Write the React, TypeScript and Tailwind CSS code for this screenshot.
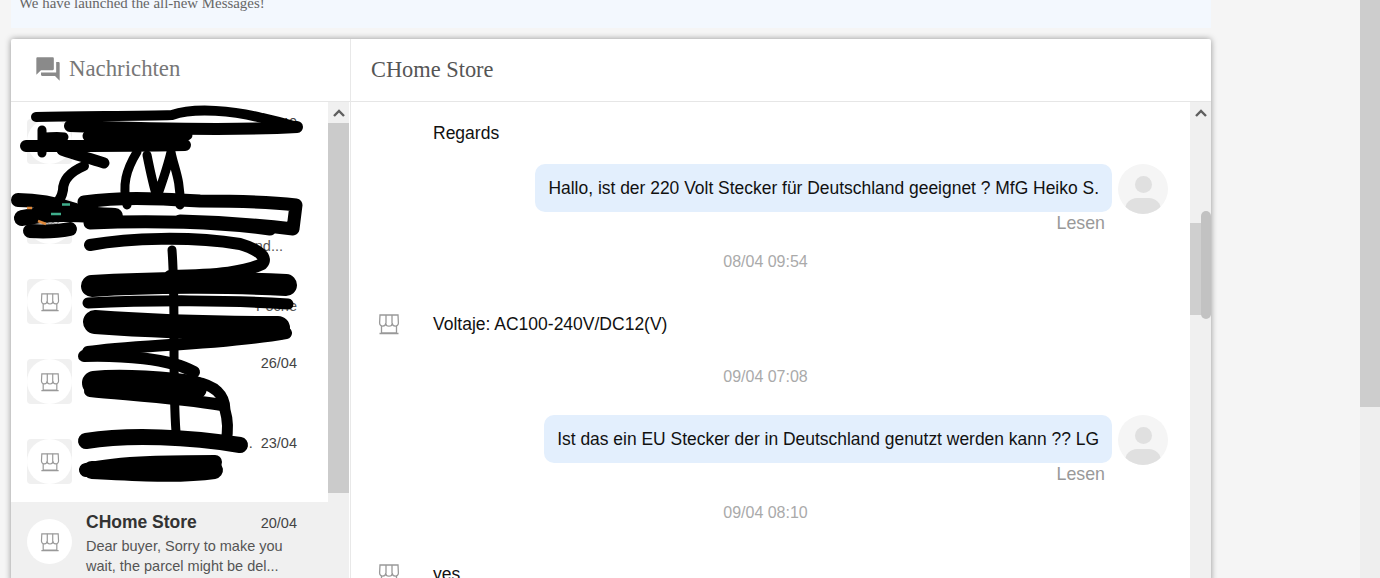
import React from "react";

const sans = "font-['Liberation_Sans',Arial,sans-serif]";
const serif = "font-['Liberation_Serif','Times_New_Roman',serif]";

function StoreIcon({ size = 22 }: { size?: number }) {
  return (
    <svg width={size} height={size} viewBox="0 0 22 22" fill="none" stroke="#999999" strokeWidth="1.3">
      <path d="M2 2h18l.4 8a3.1 3.1 0 0 1-6.2 0 3.2 3.2 0 0 1-6.4 0 3.1 3.1 0 0 1-6.2 0z" />
      <path d="M8 2v8M14 2v8" />
      <path d="M3.5 13v7h15v-7M1.5 20.5h19" />
    </svg>
  );
}

function StoreAvatar() {
  return (
    <div className="w-[45px] h-[45px] shrink-0 rounded-full bg-white flex items-center justify-center">
      <StoreIcon size={20} />
    </div>
  );
}

function ListAvatar() {
  return (
    <div className="w-[45px] h-[45px] shrink-0 bg-[#f0f0f0] rounded-[4px]">
      <StoreAvatar />
    </div>
  );
}

function ChevronUp() {
  return (
    <svg width="12" height="8" viewBox="0 0 12 8" fill="none" stroke="#5f5f5f" strokeWidth="2.4">
      <path d="M1 7l5-5 5 5" />
    </svg>
  );
}

function Row({
  name,
  date,
  line1,
  line2,
  active,
  fragment1,
  fragment2,
}: {
  name: string;
  date: string;
  line1: string;
  line2: string;
  active?: boolean;
  fragment1?: boolean;
  fragment2?: boolean;
}) {
  return (
    <div className={`h-[80px] shrink-0 flex pl-[16px] pr-[31px] pt-[17px] ${active ? "bg-[#f0f0f0]" : "bg-white"}`}>
      {active ? <StoreAvatar /> : <ListAvatar />}
      <div className="ml-[14px] flex-1 min-w-0 -mt-[9px]">
        <div className="flex justify-between items-center h-[24px]">
          <span className="text-[17.5px] font-bold text-[#333] whitespace-nowrap">{name}</span>
          <span className="text-[14.5px] text-[#444] ml-auto mt-[3px] whitespace-pre">{date}</span>
        </div>
        <div className="h-[42px] text-[14.5px] leading-[20px] text-[#555] mt-[2px] whitespace-nowrap">
          <div className={`h-[20px] ${fragment1 ? "text-right" : ""}`}>{line1}</div>
          <div className={`h-[20px] ${fragment2 ? "text-right pr-[14px]" : ""}`}>{line2}</div>
        </div>
      </div>
    </div>
  );
}

function UserAvatar() {
  return (
    <div className="w-[50px] h-[50px] rounded-full bg-[#f5f5f5] overflow-hidden shrink-0 flex flex-col items-center pt-[12px]">
      <div className="w-[17px] h-[17px] shrink-0 rounded-full bg-[#e0e0e0]" />
      <div className="w-[36px] h-[24px] shrink-0 rounded-full bg-[#e0e0e0] mt-[5px]" />
    </div>
  );
}

function Outgoing({ text, className }: { text: string; className: string }) {
  return (
    <div className={className}>
      <div className="flex justify-end items-start pr-[22px]">
        <div className="h-[48px] bg-[#e3effd] rounded-[10px] px-[13px] flex items-center text-[17.45px] text-[#111] whitespace-nowrap">
          {text}
        </div>
        <div className="ml-[6px]">
          <UserAvatar />
        </div>
      </div>
      <div className="pr-[85px] text-right text-[17.8px] leading-[20px] text-[#999] -mt-[1px]">Lesen</div>
    </div>
  );
}

function Stamp({ text, className }: { text: string; className: string }) {
  return <div className={`text-center text-[16px] leading-[20px] text-[#aaa] pr-[10px] ${className}`}>{text}</div>;
}

function Incoming({ text, className }: { text: string; className: string }) {
  return (
    <div className={`flex items-center pl-[27px] ${className}`}>
      <StoreIcon size={22} />
      <span className="ml-[33px] text-[17.5px] text-[#111] leading-[20px]">{text}</span>
    </div>
  );
}

function Scribble() {
  return (
    <svg className="absolute left-[11px] top-[102px] pointer-events-none" width="300" height="385" viewBox="11 102 300 385" fill="none" stroke="#000" strokeLinecap="round" strokeLinejoin="round">
      <path strokeWidth="10" d="M36 117C80 116 140 116 172 115C195 107 235 111 262 118C280 122 290 125 297 127" />
      <path strokeWidth="12" d="M70 126C130 128 230 131 297 127" />
      <path strokeWidth="11" d="M88 136C120 137 160 137 187 135" />
      <path strokeWidth="12" d="M26 146C80 146 140 146 185 145" />
      <path strokeWidth="9" d="M42 130V153M42 137C50 137 58 136 64 137" />
      <path strokeWidth="11" d="M62 150C75 155 90 158 104 163" />
      <path strokeWidth="10" d="M84 166C70 172 63 180 63 190C62 196 60 200 56 204" />
      <path strokeWidth="9" d="M137 152C126 170 122 185 127 205M147 155C150 170 153 185 157 197C163 180 168 165 171 152C174 168 181 180 180 205" />
      <path strokeWidth="14" d="M18 200C40 200 60 205 75 210" />
      <path strokeWidth="16" d="M22 218C50 212 80 214 115 216" />
      <path strokeWidth="14" d="M30 231C45 232 60 231 70 229" />
      <path strokeWidth="13" d="M84 202C120 197 150 198 200 201C240 201 270 202 296 205L293 229C260 225 220 222 180 221" />
      <path strokeWidth="13" d="M90 223C150 220 220 222 270 229" />
      <path strokeWidth="12" d="M90 245C130 238 190 236 240 244C260 250 268 258 262 264C245 272 220 275 170 276" />
      <path strokeWidth="9" d="M172 250C176 300 172 380 176 432" />
      <path strokeWidth="22" d="M92 286C150 282 230 282 286 285" />
      <path strokeWidth="11" d="M88 303C150 300 230 300 288 304" />
      <path strokeWidth="24" d="M95 322C150 326 230 328 278 328" />
      <path strokeWidth="12" d="M88 352C130 345 220 345 286 333" />
      <path strokeWidth="12" d="M84 356C120 355 170 358 194 372" />
      <path strokeWidth="24" d="M94 383C120 380 170 383 195 388" />
      <path strokeWidth="12" d="M90 391C130 395 180 398 222 405" />
      <path strokeWidth="11" d="M195 382C215 385 225 395 225 410C228 420 228 432 226 442" />
      <path strokeWidth="16" d="M86 441C130 434 190 437 240 445" />
      <path strokeWidth="14" d="M86 470C120 462 180 462 215 462" />
      <path strokeWidth="18" d="M92 470C130 472 180 475 214 470" />
      <path strokeWidth="2.5" stroke="#3fae8c" strokeLinecap="butt" d="M51 214h10M62 204.500h8" />
      <path strokeWidth="2.5" stroke="#e08a3c" strokeLinecap="butt" d="M27 208h5M38 221l8 3" />
    </svg>
  );
}

export default function App() {
  return (
    <div className={`relative h-[578px] overflow-hidden flex bg-[#f5f5f5] ${sans}`}>
      <div className="w-[1360px] shrink-0 pl-[11px]">
        <div className={`w-[1200px] h-[33px] bg-[#f3f8fe] overflow-hidden pl-[8px] text-[14.9px] leading-[16px] -mt-[5px] ${serif} text-[#666]`}>
          We have launched the all-new Messages!
        </div>
        <div className="relative mt-[11px] w-[1200px] h-[544px] bg-white rounded-t-[2px] shadow-[0_0_6px_rgba(0,0,0,0.4)] flex overflow-hidden">
          <div className="w-[340px] shrink-0 border-r border-[#e8e8e8] flex flex-col">
            <div className="h-[63px] shrink-0 border-b border-[#e6e6e6] flex items-center pl-[23px]">
              <svg width="28" height="28" viewBox="0 0 24 24" fill="#8a8a8a" className="-mt-[2px]">
                <path d="M21 6h-2v9H6v2c0 .55.45 1 1 1h11l4 4V7c0-.55-.45-1-1-1zm-4 6V3c0-.55-.45-1-1-1H3c-.55 0-1 .45-1 1v14l4-4h10c.55 0 1-.45 1-1z" />
              </svg>
              <span className={`ml-[7px] text-[22.8px] text-[#777] -mt-[1px] ${serif}`}>Nachrichten</span>
            </div>
            <div className="flex flex-1 min-h-0">
              <div className="flex-1 min-w-0 flex flex-col">
                <Row name="" date="15:40" line1="" line2="" />
                <Row name="" date="" line1="" line2="nd..." fragment2 />
                <Row name="" date="" line1="Poche" line2="" fragment1 />
                <Row name="" date="26/04" line1="" line2="" />
                <Row name="" date={".  23/04"} line1="" line2="" />
                <Row active name="CHome Store" date="20/04" line1="Dear buyer, Sorry to make you" line2="wait, the parcel might be del..." />
              </div>
              <div className="w-[21px] mr-[1px] shrink-0 flex flex-col bg-[#f0f0f0]">
                <div className="h-[21px] flex items-center justify-center">
                  <ChevronUp />
                </div>
                <div className="h-[370px] bg-[#cbcbcb]" />
              </div>
            </div>
          </div>
          <div className="flex-1 min-w-0 flex flex-col">
            <div className={`h-[63px] shrink-0 border-b border-[#e6e6e6] flex items-center pl-[20px] text-[22.4px] text-[#555] ${serif}`}>CHome Store</div>
            <div className="flex flex-1 min-h-0">
              <div className="flex-1 min-w-0 overflow-hidden">
                <div className="pl-[82px] pt-[21px] text-[17.5px] leading-[20px] text-[#111]">Regards</div>
                <Outgoing className="mt-[21px]" text="Hallo, ist der 220 Volt Stecker für Deutschland geeignet ? MfG Heiko S." />
                <Stamp className="mt-[19px]" text="08/04 09:54" />
                <Incoming className="mt-[41px]" text="Voltaje: AC100-240V/DC12(V)" />
                <Stamp className="mt-[32px]" text="09/04 07:08" />
                <Outgoing className="mt-[28px]" text="Ist das ein EU Stecker der in Deutschland genutzt werden kann ?? LG" />
                <Stamp className="mt-[19px]" text="09/04 08:10" />
                <Incoming className="mt-[40px]" text="yes" />
              </div>
              <div className="relative w-[21px] shrink-0 flex flex-col bg-[#f0f0f0]">
                <div className="h-[21px] flex items-center justify-center">
                  <ChevronUp />
                </div>
                <div className="h-[92px] mt-[100px] bg-[#cfcfcf]" />
                <div className="absolute right-0 top-[109px] w-[10px] h-[108px] rounded-full bg-[#c2c2c2]" />
              </div>
            </div>
          </div>
        </div>
      </div>
      <div className="w-[20px] shrink-0 flex flex-col bg-[#eeeeee]">
        <div className="h-[407px] bg-[#cdcdcd]" />
      </div>
      <div className="absolute left-0 top-0">
        <Scribble />
      </div>
    </div>
  );
}
